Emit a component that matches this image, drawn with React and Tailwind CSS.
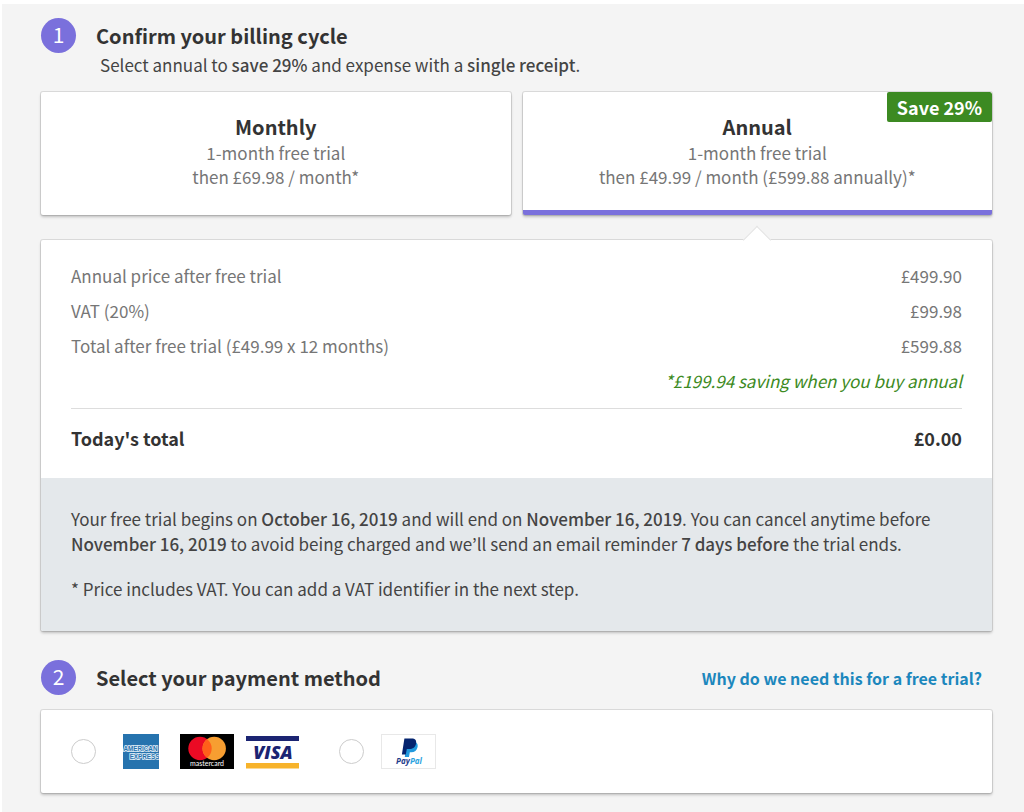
import { useState } from "react";
import clsx from "clsx";

const CARD = "rounded-xs bg-white shadow-[0_0_0_1px_rgba(0,0,0,0.1),0_2px_3px_rgba(0,0,0,0.22)]";

const PLANS = [
  {
    id: "monthly",
    name: "Monthly",
    trial: "1-month free trial",
    price: "then £69.98 / month*"
  },
  {
    id: "annual",
    name: "Annual",
    trial: "1-month free trial",
    price: "then £49.99 / month (£599.88 annually)*",
    badge: "Save 29%"
  }
];

const PRICE_ROWS = [
  { label: "Annual price after free trial", value: "£499.90" },
  { label: "VAT (20%)", value: "£99.98" },
  { label: "Total after free trial (£49.99 x 12 months)", value: "£599.88" }
];

function StepNumber({ children }) {
  return (
    <span className="flex h-[35px] w-[35px] shrink-0 items-center justify-center rounded-full bg-[#7a70dc] pb-0.5 text-[21px] leading-none text-white">
      {children}
    </span>
  );
}

function PlanCard({ plan, selected, onSelect }) {
  return (
    <button
      type="button"
      aria-pressed={selected}
      onClick={() => onSelect(plan.id)}
      className={clsx(
        CARD,
        "relative flex h-[123px] flex-1 cursor-pointer flex-col items-center overflow-hidden border-b-5 pt-[21px]",
        selected ? "border-[#7a70dc]" : "border-white"
      )}
    >
      <span className="text-xl leading-7 font-bold text-[#333]">{plan.name}</span>
      <span className="text-[17px] leading-6 text-[#767676]">{plan.trial}</span>
      <span className="text-[17px] leading-6 text-[#767676]">{plan.price}</span>
      {plan.badge && (
        <span className="absolute top-0 right-0 rounded-xs bg-[#3c8a22] px-2.5 text-lg leading-[30px] font-bold text-white">
          {plan.badge}
        </span>
      )}
    </button>
  );
}

function AmexLogo() {
  return (
    <svg width="36" height="35" viewBox="0 0 36 35" role="img" aria-label="American Express">
      <rect width="36" height="35" fill="#2673ae" />
      <g fill="#2673ae" stroke="#e4f0f8" strokeWidth="1.6" paintOrder="stroke" fontFamily="Liberation Sans, sans-serif" fontWeight="700" fontSize="6.3">
        <text x="17.5" y="17" textAnchor="middle">AMERICAN</text>
        <text x="21.500" y="24.500" textAnchor="middle">EXPRESS</text>
      </g>
    </svg>
  );
}

function MastercardLogo() {
  return (
    <svg width="54" height="35" viewBox="0 0 54 35" role="img" aria-label="Mastercard">
      <rect width="54" height="35" fill="#000" />
      <circle cx="20" cy="14.5" r="11.7" fill="#eb0a24" />
      <circle cx="34.2" cy="14.5" r="11.7" fill="#f79e31" />
      <path d="M27.1 5.2a11.7 11.7 0 0 1 0 18.6 11.7 11.7 0 0 1 0-18.6z" fill="#ff5f1a" />
      <text x="27" y="32" textAnchor="middle" fill="#fff" fontFamily="Lato, sans-serif" fontSize="7">
        mastercard
      </text>
    </svg>
  );
}

function VisaLogo() {
  return (
    <svg width="53" height="34" viewBox="0 0 53 34" role="img" aria-label="Visa">
      <rect y="1" width="53" height="5" fill="#1b2472" />
      <rect y="28" width="53" height="5.500" fill="#f7b32b" />
      <text x="27" y="23.500" textAnchor="middle" fill="#1b2472" fontFamily="Open Sans, sans-serif" fontWeight="800" fontStyle="italic" fontSize="18">
        VISA
      </text>
    </svg>
  );
}

function PaypalLogo() {
  return (
    <svg width="55" height="35" viewBox="0 0 55 35" role="img" aria-label="PayPal">
      <rect x="0.5" y="0.5" width="54" height="34" fill="#fff" stroke="#e8e8e8" />
      <path d="M25.5 8h7.200c3 0 4.500 2 3.900 5-.7 3.600-3 5.200-6.300 5.200h-1.500L28 23h-4.200z" fill="#2199dd" />
      <path d="M23.400 4.500h7.300c3.500 0 5 1.900 4.400 5-.8 3.900-3.200 5.500-6.900 5.500h-2.400l-1 5.500h-3.900z" fill="#05246f" />
      <text x="28" y="30" textAnchor="middle" fontFamily="Open Sans, sans-serif" fontWeight="700" fontStyle="italic" fontSize="8">
        <tspan fill="#1f3d8a">Pay</tspan>
        <tspan fill="#2ba3e0">Pal</tspan>
      </text>
    </svg>
  );
}

function PaymentRadio({ id, checked, onChange }) {
  return (
    <input
      id={id}
      type="radio"
      name="payment-method"
      checked={checked}
      onChange={onChange}
      className="h-[25px] w-[25px] shrink-0 cursor-pointer appearance-none rounded-full border border-[#ccc] bg-white checked:border-8 checked:border-[#7a70dc]"
    />
  );
}

export default function App() {
  const [plan, setPlan] = useState("annual");
  const [payment, setPayment] = useState(null);

  return (
    <main className="min-h-screen border-t-4 border-l-2 border-white bg-[#f4f4f4] pt-3.5 pr-8 pb-4 pl-[39px] font-['Noto_Sans_CJK_KR',sans-serif] text-[17px] text-[#444]">
      <section>
        <header className="flex gap-5">
          <StepNumber>1</StepNumber>
          <div className="pt-1">
            <h2 className="text-xl leading-7 font-bold text-[#333]">Confirm your billing cycle</h2>
            <p className="pl-1 leading-[30px]">
              Select annual to <b className="font-medium">save 29%</b> and expense with a <b className="font-medium">single receipt</b>.
            </p>
          </div>
        </header>

        <div className="mt-3 flex gap-3">
          {PLANS.map((item) => (
            <PlanCard key={item.id} plan={item} selected={plan === item.id} onSelect={setPlan} />
          ))}
        </div>

        <div className={clsx(CARD, "relative mt-[25px]")}>
          {/* Pointer up to the selected plan */}
          <span
            className={clsx(
              "absolute -top-2.5 h-5 w-5 -translate-x-1/2 rotate-45 border-t border-l border-[#e2e2e2] bg-white",
              plan === "annual" ? "left-[calc(75%+3px)]" : "left-[calc(25%-3px)]"
            )}
          />
          <div className="relative px-[30px] pt-[18px] pb-[18px]">
            <table className="w-full">
              <tbody className="text-[#767676]">
                {PRICE_ROWS.map((row) => (
                  <tr key={row.label} className="h-[35px]">
                    <th scope="row" className="text-left leading-6 font-normal">{row.label}</th>
                    <td className="text-right leading-6">{row.value}</td>
                  </tr>
                ))}
                <tr className="h-[35px]">
                  <td colSpan={2} className="text-right leading-6 text-[#3c8a22] italic">
                    *£199.94 saving when you buy annual
                  </td>
                </tr>
              </tbody>
              <tfoot className="text-lg text-[#333]">
                <tr>
                  <td colSpan={2} className="h-2.5" />
                </tr>
                <tr className="h-[52px] border-t border-[#ddd]">
                  <th scope="row" className="pt-2 text-left leading-7 font-bold">Today's total</th>
                  <td className="pt-2 text-right leading-7 font-bold">£0.00</td>
                </tr>
              </tfoot>
            </table>
          </div>
          <div className="rounded-b-xs bg-[#e4e8eb] px-[30px] pt-7 pb-[30px] leading-[25px]">
            <p>
              Your free trial begins on <b className="font-medium">October 16, 2019</b> and will end on{" "}
              <b className="font-medium">November 16, 2019</b>. You can cancel anytime before{" "}
              <b className="font-medium">November 16, 2019</b> to avoid being charged and we’ll send an email reminder{" "}
              <b className="font-medium">7 days before</b> the trial ends.
            </p>
            <p className="mt-5">* Price includes VAT. You can add a VAT identifier in the next step.</p>
          </div>
        </div>
      </section>

      <section className="mt-[29px]">
        <header className="flex items-center gap-5">
          <StepNumber>2</StepNumber>
          <h2 className="flex-1 text-xl leading-7 font-bold text-[#333]">Select your payment method</h2>
          <a href="#why" className="pr-2.5 text-base leading-6 font-bold text-[#1c87bd] hover:underline">
            Why do we need this for a free trial?
          </a>
        </header>

        <div className={clsx(CARD, "mt-[15px] flex h-[83px] items-center gap-10 px-[30px]")}>
          <div className="flex items-center gap-[27px]">
            <PaymentRadio id="pay-card" checked={payment === "card"} onChange={() => setPayment("card")} />
            <label htmlFor="pay-card" className="flex cursor-pointer items-center">
              <AmexLogo />
              <span className="mr-3 ml-[21px]">
                <MastercardLogo />
              </span>
              <VisaLogo />
            </label>
          </div>
          <div className="flex items-center gap-[17px]">
            <PaymentRadio id="pay-paypal" checked={payment === "paypal"} onChange={() => setPayment("paypal")} />
            <label htmlFor="pay-paypal" className="cursor-pointer">
              <PaypalLogo />
            </label>
          </div>
        </div>
      </section>
    </main>
  );
}
